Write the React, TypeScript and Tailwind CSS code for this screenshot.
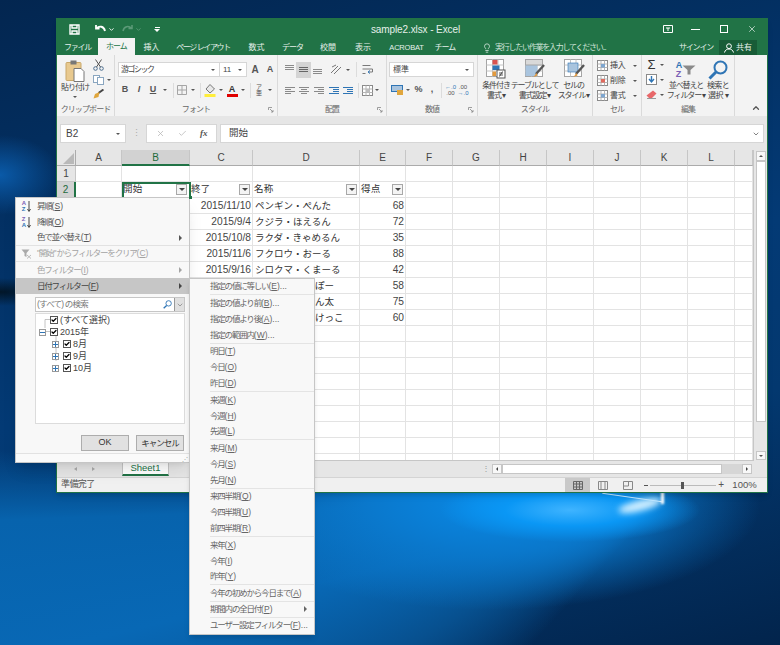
import { ChevronDown, ChevronUp, Check, Lightbulb, X } from "lucide-react";
import type { ReactNode } from "react";

const columns = [
  { name: "A", width: "w-[46px]" },
  { name: "B", width: "w-[68px]" },
  { name: "C", width: "w-[63px]" },
  { name: "D", width: "w-[107px]" },
  { name: "E", width: "w-[46px]" },
  { name: "F", width: "w-[47px]" },
  { name: "G", width: "w-[47px]" },
  { name: "H", width: "w-[47px]" },
  { name: "I", width: "w-[47px]" },
  { name: "J", width: "w-[47px]" },
  { name: "K", width: "w-[47px]" },
  { name: "L", width: "w-[47px]" },
  { name: "", width: "w-[18px]" },
];

// names in rows 8-10 are mostly hidden by the date submenu
const tableRows = [
  ["2015/11/10", "ペンギン・ぺんた", "68"],
  ["2015/9/4", "クジラ・ほえるん", "72"],
  ["2015/10/8", "ラクダ・きゃめるん", "35"],
  ["2015/11/6", "フクロウ・おーる", "88"],
  ["2015/9/16", "シロクマ・くまーる", "42"],
  ["", "ぽー", "58"],
  ["", "ん太", "75"],
  ["", "けっこ", "60"],
];

const dateGroups = [
  ["指定の値に等しい(E)..."],
  ["指定の値より前(B)...", "指定の値より後(A)...", "指定の範囲内(W)..."],
  ["明日(T)", "今日(O)", "昨日(D)"],
  ["来週(K)", "今週(H)", "先週(L)"],
  ["来月(M)", "今月(S)", "先月(N)"],
  ["来四半期(Q)", "今四半期(U)", "前四半期(R)"],
  ["来年(X)", "今年(I)", "昨年(Y)"],
  ["今年の初めから今日まで(A)"],
  ["期間内の全日付(P)"],
  ["ユーザー設定フィルター(F)..."],
];

const treeItems = [
  { label: "(すべて選択)", indent: "ml-[14px]", mark: "" },
  { label: "2015年", indent: "ml-[14px]", mark: "-" },
  { label: "8月", indent: "ml-[27px]", mark: "+" },
  { label: "9月", indent: "ml-[27px]", mark: "+" },
  { label: "10月", indent: "ml-[27px]", mark: "+" },
];

function Mnemonic({ text }: { text: string }) {
  const m = text.match(/^(.*)\((.)\)(.*)$/);
  if (!m) return <span>{text}</span>;
  return (
    <span>
      {m[1]}
      <span className="tracking-[0px]">
        (<span className="underline">{m[2]}</span>){m[3]}
      </span>
    </span>
  );
}

function Caret() {
  return <span className="block w-0 h-0 border-x-[2px] border-x-transparent border-t-[2px] border-t-[#555]" />;
}

function Slot({ w, children }: { w: string; children?: ReactNode }) {
  return <span className={`${w} h-full flex items-center justify-center shrink-0`}>{children}</span>;
}

function Sep() {
  return <span className="w-px h-[15px] bg-[#dcdcdc]" />;
}

function Launcher() {
  return (
    <svg width="6" height="6" viewBox="0 0 6 6" className="absolute right-[3px] top-[4px]" fill="none" stroke="#888" strokeWidth="0.8">
      <path d="M0.5 3V0.5H4M2 2l3 3M5 3v2H3" />
    </svg>
  );
}

function FilterButton() {
  return (
    <span className="w-[11px] h-[11px] bg-[#f4f4f4] border border-[#a8a8a8] flex items-center justify-center shrink-0">
      <span className="w-0 h-0 border-x-[3px] border-x-transparent border-t-[3px] border-t-[#444]" />
    </span>
  );
}

function RibbonGroup({ label, width, launcher, children }: { label: string; width: string; launcher?: boolean; children: ReactNode }) {
  return (
    <div className={`${width} h-full border-r border-[#dadada] flex flex-col shrink-0`}>
      <div className="flex-1 min-h-0">{children}</div>
      <div className="h-[13px] relative text-[8px] leading-[13px] tracking-[-0.9px] text-center text-[#666] whitespace-nowrap">
        {label}
        {launcher && <Launcher />}
      </div>
    </div>
  );
}

function Lines({ rows, color = "#8a8a8a" }: { rows: [number, number, number][]; color?: string }) {
  return (
    <svg width="11" height="11" viewBox="0 0 11 11" stroke={color} strokeWidth="1" fill="none">
      {rows.map(([y, x, w]) => (
        <path key={`${y}-${x}`} d={`M${x} ${y + 0.5}h${w}`} />
      ))}
    </svg>
  );
}

function TinyGrid({ accent = "#bdbdbd" }: { accent?: string }) {
  return (
    <svg width="11" height="11" viewBox="0 0 11 11" fill="none" className="shrink-0">
      <rect x="0.5" y="0.5" width="10" height="10" fill="#fff" stroke="#8a8a8a" />
      <path d="M0.5 4h10M0.5 7.5h10M4 0.5v10M7.5 0.5v10" stroke="#b5b5b5" />
      <rect x="4" y="4" width="4" height="3.5" fill={accent} />
    </svg>
  );
}

function BigGridIcon({ kind }: { kind: "cond" | "table" | "style" }) {
  return (
    <svg width="22" height="21" viewBox="0 0 22 21" fill="none" className="shrink-0">
      <rect x="1.5" y="0.5" width="17" height="17" fill="#fff" stroke="#a5a5a5" />
      <path d="M1.5 6h17M1.5 12h17M7.5 0.5v17M13 0.5v17" stroke="#c4c4c4" />
      {kind === "cond" && (
        <>
          <rect x="7.5" y="1" width="5" height="4.5" fill="#d9534f" />
          <rect x="7.5" y="6.5" width="7" height="4.5" fill="#2f75b5" />
          <rect x="7.5" y="12.5" width="3.5" height="4.5" fill="#e39a3d" />
          <rect x="12" y="11" width="8" height="8" fill="#fff" stroke="#555" />
          <path d="M14 14h4M14 16h4M17.5 12.5l-3 5" stroke="#333" strokeWidth="0.8" />
        </>
      )}
      {kind === "table" && (
        <>
          <rect x="1.5" y="6" width="12" height="11" fill="#a9c4de" />
          <rect x="1.5" y="0.5" width="17" height="5.5" fill="#d9d9d9" stroke="#a5a5a5" />
          <path d="M20 6l-8 9" stroke="#555" strokeWidth="2.4" />
          <path d="M12.5 14l-3 4 4-1.5z" fill="#e39a3d" />
        </>
      )}
      {kind === "style" && (
        <>
          <rect x="5" y="4" width="10" height="9" fill="#a9c4de" stroke="#2f75b5" strokeWidth="0.6" />
          <path d="M21 6l-8 9" stroke="#555" strokeWidth="2.4" />
          <path d="M13.5 14l-3 4 4-1.5z" fill="#e39a3d" />
        </>
      )}
    </svg>
  );
}

function BigButton({ w, lines, kind }: { w: string; lines: string[]; kind: "cond" | "table" | "style" }) {
  return (
    <div className={`${w} flex flex-col items-center shrink-0`}>
      <BigGridIcon kind={kind} />
      <div className="mt-[1px] text-[8px] leading-[10px] tracking-[-1.1px] text-center text-[#444] whitespace-nowrap">
        {lines.map((line) => (
          <div key={line}>{line}</div>
        ))}
      </div>
    </div>
  );
}

function CellRow({ n, cells }: { n: number; cells?: ReactNode[] }) {
  return (
    <div className="flex h-4 shrink-0">
      <div className={`w-[19px] shrink-0 border-r border-b text-center text-[10px] leading-[15px] ${n === 2 ? "bg-[#d2d2d2] text-[#1e6b3c] border-r-2 border-r-[#217346] border-b-[#c6c6c6]" : "bg-[#e6e6e6] text-[#444] border-[#c6c6c6]"}`}>
        {n <= 2 ? n : ""}
      </div>
      {columns.map((col, i) => (
        <div key={col.name} className={`${col.width} shrink-0 border-r border-b border-[#e3e3e3] overflow-hidden`}>
          {cells?.[i]}
        </div>
      ))}
    </div>
  );
}

function Header({ label }: { label: string }) {
  return (
    <div className="h-full flex items-center justify-between pl-[1px] pr-[2px] text-[9.5px] tracking-[0.2px] text-[#333]">
      <span>{label}</span>
      <FilterButton />
    </div>
  );
}

function MenuRow({ icon, text, arrow, tone, border }: { icon?: ReactNode; text: string; arrow?: boolean; tone: string; border?: boolean }) {
  return (
    <div className={`h-4 shrink-0 flex items-center ${tone} ${border ? "border-b border-[#e2e2e2]" : ""}`}>
      <span className="w-[21px] shrink-0 flex justify-center">{icon}</span>
      <span className="flex-1 whitespace-nowrap"><Mnemonic text={text} /></span>
      {arrow && <span className="mr-[7px] w-0 h-0 border-y-[3px] border-y-transparent border-l-[3px] border-l-current" />}
    </div>
  );
}

function SortIcon({ top, bottom }: { top: string; bottom: string }) {
  return (
    <span className="flex items-center gap-[1px]">
      <span className="flex flex-col text-[6px] leading-[6px] font-bold text-[#7a5fb5] tracking-[0px]">
        <span>{top}</span>
        <span className="text-[#2f75b5]">{bottom}</span>
      </span>
      <svg width="4" height="11" viewBox="0 0 4 11" fill="none" stroke="#444"><path d="M2 0v10M0.5 8L2 10.5 3.5 8" /></svg>
    </span>
  );
}

function Magnifier({ size, className }: { size: number; className?: string }) {
  return (
    <svg width={size} height={size} viewBox="0 0 20 20" fill="none" stroke="#2f75b5" className={className}>
      <circle cx="12.5" cy="7.5" r="6" strokeWidth="2" />
      <path d="M8 12l-6.5 6.5" strokeWidth="3" />
    </svg>
  );
}

export default function App() {
  const rows: { n: number; cells?: ReactNode[] }[] = [
    { n: 1 },
    {
      n: 2,
      cells: [
        null,
        <Header label="開始" />,
        <Header label="終了" />,
        <Header label="名称" />,
        <Header label="得点" />,
      ],
    },
    ...tableRows.map((r, i) => ({
      n: i + 3,
      cells: [
        null,
        null,
        <div className="text-right pr-[1px] text-[10.2px] leading-[15px] text-[#444]">{r[0]}</div>,
        <div className={`text-[9.5px] leading-[15px] text-[#333] whitespace-nowrap ${i > 4 ? "pl-[62px]" : "pl-[2px]"}`}>{r[1]}</div>,
        <div className="text-right pr-[1px] text-[10.2px] leading-[15px] text-[#444]">{r[2]}</div>,
      ],
    })),
    ...[11, 12, 13, 14, 15, 16, 17, 18, 19].map((n) => ({ n })),
  ];

  return (
    <div className="relative w-[780px] h-[645px] overflow-hidden font-['Liberation_Sans','Noto_Sans_CJK_JP',sans-serif] bg-[radial-gradient(ellipse_130px_32px_at_570px_510px,#3fb4ff_0%,#0a97f5_50%,transparent_100%),radial-gradient(ellipse_270px_105px_at_490px_505px,#0a88e4_0%,#0a78cc_45%,transparent_100%),conic-gradient(from_222deg_at_665px_497px,transparent_0deg,#07508f_18deg,#0868b5_34deg,#0763ad_46deg,transparent_52deg,transparent_360deg),radial-gradient(ellipse_70px_14px_at_0px_292px,#021628_0%,transparent_100%),radial-gradient(ellipse_60px_40px_at_0px_175px,#0a5aa8_0%,transparent_100%),linear-gradient(165deg,#032650_0%,#033a75_50%,#03386f_70%,#02244c_100%)]">
      {/* light flare under the window */}
      <div className="absolute left-[618px] top-[500px] w-[44px] h-[11px] rounded-[50%] bg-[#cfeeff] blur-[3px] rotate-[-14deg]" />
      <div className="absolute left-[602px] top-[497px] w-[60px] h-px bg-[#bfe6ff] rotate-[8deg]" />
      <div className="absolute left-[661px] top-[492px] w-[3px] h-[12px] bg-white blur-[1px]" />

      {/* excel window */}
      <div className="absolute left-[56px] top-[18px] w-[712px] h-[475px] flex flex-col bg-[#e6e6e6] border border-[#217346] shadow-md">
        {/* title bar */}
        <div className="h-[20px] bg-[#217346] flex items-center text-white shrink-0">
          <svg width="11" height="11" viewBox="0 0 11 11" className="ml-[12px]" fill="none" stroke="#fff" strokeWidth="1.4"><path d="M1 1h9v9H1zM3 1v3h5V1M3 10V7h5v3" /></svg>
          <svg width="11" height="10" viewBox="0 0 11 10" className="ml-[15px]" fill="none" stroke="#fff" strokeWidth="1.8"><path d="M1 1v3.5h3.5M1.5 4.5C4 1.5 9 2 10 7" /></svg>
          <ChevronDown className="ml-[2px] w-[7px] h-[7px]" strokeWidth={3} />
          <svg width="11" height="10" viewBox="0 0 11 10" className="ml-[7px]" fill="none" stroke="#5c9a78" strokeWidth="1.5"><path d="M10 1v3.5H6.5M9.5 4.5C7 1.5 2 2 1 7" /></svg>
          <ChevronDown className="ml-[2px] w-[7px] h-[7px] text-[#5c9a78]" strokeWidth={3} />
          <span className="ml-[12px] flex flex-col items-center gap-[1px]">
            <span className="w-[5px] h-px bg-white" />
            <span className="w-0 h-0 border-x-[3px] border-x-transparent border-t-[3px] border-t-white" />
          </span>
          <div className="flex-1 text-center text-[10px] text-[#e5f0ea] pl-[8px] tracking-[-0.1px]">sample2.xlsx - Excel</div>
          <svg width="10" height="8" viewBox="0 0 10 8" className="mr-[18px]" fill="none" stroke="#fff"><path d="M0.5 0.5h9v7h-9zM3 3h4M5 3v3" /></svg>
          <span className="w-[9px] h-px bg-white mr-[20px]" />
          <span className="w-[8px] h-[8px] border border-white mr-[19px]" />
          <X className="w-[10px] h-[10px] mr-[10px]" strokeWidth={1.5} />
        </div>

        {/* tabs */}
        <div className="h-[16px] bg-[#217346] flex items-end text-[8px] leading-[15px] text-[#e5f0ea] shrink-0 whitespace-nowrap">
          <span className="w-[41px] text-center tracking-[-1.2px]">ファイル</span>
          <span className="w-[37px] h-[17px] bg-[#f3f3f3] text-[#217346] text-center leading-[17px] tracking-[-1px]">ホーム</span>
          <span className="w-[33px] text-center">挿入</span>
          <span className="w-[70px] text-center tracking-[-1.4px]">ページ レイアウト</span>
          <span className="w-[37px] text-center">数式</span>
          <span className="w-[35px] text-center tracking-[-1px]">データ</span>
          <span className="w-[36px] text-center">校閲</span>
          <span className="w-[34px] text-center">表示</span>
          <span className="w-[53px] text-center tracking-[-0.2px] text-[7.5px]">ACROBAT</span>
          <span className="w-[24px] text-center tracking-[-1px]">チーム</span>
          <span className="flex items-center ml-[25px] gap-[3px] text-[#cfe3d8] tracking-[-1.25px]">
            <Lightbulb className="w-[10px] h-[10px]" />
            実行したい作業を入力してください...
          </span>
          <span className="ml-auto mr-[6px] tracking-[-1.2px]">サインイン</span>
          <span className="w-[38px] mr-[10px] h-[15px] bg-[#185c37] flex items-center justify-center gap-[2px]">
            <svg width="10" height="10" viewBox="0 0 10 10" fill="none" stroke="#fff"><circle cx="5" cy="3.2" r="2.4" /><path d="M0.5 9.5C1 7 3 6 5 6s4 1 4.5 3.5" /></svg>
            共有
          </span>
        </div>

        {/* ribbon */}
        <div className="h-[61px] bg-[#f3f3f3] flex shrink-0 text-[#444]">
          <RibbonGroup label="クリップボード" width="w-[58px]">
            <div className="flex h-full">
              <div className="w-[36px] flex flex-col items-center pt-[5px]">
                <svg width="22" height="22" viewBox="0 0 22 22" fill="none" className="shrink-0">
                  <rect x="2" y="2.5" width="15" height="18" rx="1" fill="#e8c98f" stroke="#c9a86a" />
                  <rect x="6.5" y="0.5" width="6" height="4" fill="#777" />
                  <path d="M10 8.5h7l3 3v10H10z" fill="#fff" stroke="#777" />
                </svg>
                <div className="mt-[1px] text-[8px] leading-[10px] tracking-[-1px] whitespace-nowrap">貼り付け</div>
                <div className="mt-[3px]"><Caret /></div>
              </div>
              <div className="flex flex-col pt-[4px] gap-[4px]">
                <svg width="11" height="12" viewBox="0 0 11 12" fill="none" stroke="#4d6e8f"><circle cx="2.5" cy="9.5" r="1.8" /><circle cx="8.5" cy="9.5" r="1.8" /><path d="M3.5 8L8.5 0.5M7.5 8L2.5 0.5" stroke="#555" /></svg>
                <span className="flex items-center gap-[3px]">
                  <svg width="11" height="10" viewBox="0 0 11 10" fill="#fff" stroke="#8aa6c0"><rect x="0.5" y="0.5" width="6" height="7" /><rect x="4.5" y="2.5" width="6" height="7" /></svg>
                  <Caret />
                </span>
                <svg width="11" height="10" viewBox="0 0 11 10" fill="none"><path d="M10.5 0.5L5.5 4" stroke="#444" strokeWidth="2" /><path d="M6.5 3L2 5 0.5 9.5l5-1.5z" fill="#e0a63d" /></svg>
              </div>
            </div>
          </RibbonGroup>

          <RibbonGroup label="フォント" width="w-[163px]" launcher>
            <div className="pl-[3px] pt-[7px]">
              <div className="flex h-[15px] items-center">
                <div className="w-[102px] h-[15px] bg-white border border-[#d6d6d6] flex items-center pl-[2px] pr-[4px] text-[8px] tracking-[-1.5px]">
                  <span className="flex-1">游ゴシック</span>
                  <Caret />
                </div>
                <div className="w-[27px] h-[15px] bg-white border border-[#d6d6d6] border-l-0 flex items-center pl-[3px] pr-[4px] text-[8px]">
                  <span className="flex-1">11</span>
                  <Caret />
                </div>
                <Slot w="w-[16px]"><span className="text-[10px] font-bold text-[#555]">A</span></Slot>
                <Slot w="w-[14px]"><span className="text-[9px] font-bold text-[#555]">A</span></Slot>
              </div>
              <div className="flex h-[16px] mt-[5px] items-center font-bold text-[9px] text-[#555]">
                <Slot w="w-[14px]">B</Slot>
                <Slot w="w-[14px]"><span className="italic">I</span></Slot>
                <Slot w="w-[14px]"><span className="underline">U</span></Slot>
                <Slot w="w-[10px]"><Caret /></Slot>
                <Slot w="w-[6px]"><Sep /></Slot>
                <Slot w="w-[12px]">
                  <svg width="10" height="10" viewBox="0 0 10 10" fill="none" stroke="#a5a5a5"><path d="M0.5 0.5h9v9h-9zM5 0.5v9M0.5 5h9" /></svg>
                </Slot>
                <Slot w="w-[10px]"><Caret /></Slot>
                <Slot w="w-[5px]"><Sep /></Slot>
                <Slot w="w-[14px]">
                  <svg width="12" height="13" viewBox="0 0 12 13" fill="none"><path d="M6 0.5L10.5 5 6 9 2 5z" fill="#e8e8e8" stroke="#777" /><rect x="0.5" y="10" width="11" height="3" fill="#ffee3b" /></svg>
                </Slot>
                <Slot w="w-[8px]"><Caret /></Slot>
                <Slot w="w-[14px]">
                  <span className="w-[11px] h-[13px] text-[9px] leading-[10px] text-center text-[#333] border-b-[3px] border-b-[#e00000]">A</span>
                </Slot>
                <Slot w="w-[8px]"><Caret /></Slot>
                <Slot w="w-[6px]"><Sep /></Slot>
                <Slot w="w-[12px]"><span className="text-[6px] leading-[6px] text-center font-normal">ア<br />亜</span></Slot>
                <Slot w="w-[10px]"><Caret /></Slot>
              </div>
            </div>
          </RibbonGroup>

          <RibbonGroup label="配置" width="w-[109px]" launcher>
            <div className="pl-[5px] pt-[7px]">
              <div className="flex h-[15px] items-center">
                <Slot w="w-[12px]"><Lines rows={[[1, 1, 9], [3, 1, 9], [5, 1, 9]]} /></Slot>
                <span className="w-[15px] h-[16px] ml-[1px] bg-[#d4d4d4] flex items-center justify-center"><Lines rows={[[3, 1, 9], [5, 1, 9], [7, 1, 9]]} color="#666" /></span>
                <Slot w="w-[12px]"><Lines rows={[[5, 1, 9], [7, 1, 9], [9, 1, 9]]} /></Slot>
                <Slot w="w-[6px]" />
                <Slot w="w-[14px]">
                  <svg width="12" height="11" viewBox="0 0 12 11" fill="none"><path d="M1 9l7-7M4 10l7-7" stroke="#777" /><path d="M2 3l4-2" stroke="#777" /></svg>
                </Slot>
                <Slot w="w-[9px]"><Caret /></Slot>
                <Slot w="w-[9px]"><Sep /></Slot>
                <Slot w="w-[12px]">
                  <svg width="11" height="11" viewBox="0 0 11 11" fill="none"><path d="M0.5 1.5h8M0.5 5h10v3H7M0.5 9.5h3" stroke="#7a7a7a" /><path d="M8 6.5L6 8l2 1.5" stroke="#2f75b5" /></svg>
                </Slot>
              </div>
              <div className="flex h-[16px] mt-[5px] items-center">
                <Slot w="w-[14px]"><Lines rows={[[2, 0, 10], [4, 0, 6], [6, 0, 10], [8, 0, 6]]} /></Slot>
                <Slot w="w-[14px]"><Lines rows={[[2, 0, 10], [4, 2, 6], [6, 0, 10], [8, 2, 6]]} /></Slot>
                <Slot w="w-[16px]"><Lines rows={[[2, 0, 10], [4, 4, 6], [6, 0, 10], [8, 4, 6]]} /></Slot>
                <Slot w="w-[14px]"><Lines rows={[[2, 0, 10], [4, 4, 6], [6, 4, 6], [8, 0, 10]]} color="#2f75b5" /></Slot>
                <Slot w="w-[14px]"><Lines rows={[[2, 0, 10], [4, 4, 6], [6, 4, 6], [8, 0, 10]]} color="#2f75b5" /></Slot>
                <Slot w="w-[6px]"><Sep /></Slot>
                <Slot w="w-[12px]"><TinyGrid /></Slot>
                <Slot w="w-[8px]"><Caret /></Slot>
              </div>
            </div>
          </RibbonGroup>

          <RibbonGroup label="数値" width="w-[91px]" launcher>
            <div className="pl-[2px] pt-[7px]">
              <div className="w-[85px] h-[15px] bg-white border border-[#d6d6d6] flex items-center pl-[3px] pr-[4px] text-[8px]">
                <span className="flex-1">標準</span>
                <Caret />
              </div>
              <div className="flex h-[16px] mt-[5px] items-center text-[9px] font-bold text-[#555]">
                <Slot w="w-[15px]">
                  <svg width="12" height="10" viewBox="0 0 12 10"><rect x="0.5" y="0.5" width="11" height="6" fill="#a9c4de" stroke="#2f75b5" /><rect x="6" y="5" width="6" height="5" fill="#e0a63d" /></svg>
                </Slot>
                <Slot w="w-[7px]"><Caret /></Slot>
                <Slot w="w-[15px]">%</Slot>
                <Slot w="w-[12px]">,</Slot>
                <Slot w="w-[6px]"><Sep /></Slot>
                <Slot w="w-[13px]"><span className="text-[6px] leading-[6px] text-center font-normal text-[#2f75b5]">←.0<br /><span className="text-[#555]">.00</span></span></Slot>
                <Slot w="w-[12px]"><span className="text-[6px] leading-[6px] text-center font-normal text-[#555]">.00<br /><span className="text-[#2f75b5]">→.0</span></span></Slot>
              </div>
            </div>
          </RibbonGroup>

          <RibbonGroup label="スタイル" width="w-[115px]">
            <div className="flex pl-[2px] pt-[4px]">
              <BigButton w="w-[32px]" lines={["条件付き", "書式 ▾"]} kind="cond" />
              <BigButton w="w-[45px]" lines={["テーブルとして", "書式設定 ▾"]} kind="table" />
              <BigButton w="w-[33px]" lines={["セルの", "スタイル ▾"]} kind="style" />
            </div>
          </RibbonGroup>

          <RibbonGroup label="セル" width="w-[49px]">
            <div className="pl-[4px] pt-[3px] flex flex-col text-[8px] leading-[15px]">
              {["挿入", "削除", "書式"].map((t, i) => (
                <div key={t} className="h-[15px] flex items-center gap-[2px]">
                  <TinyGrid accent={i === 1 ? "#e06a5e" : "#7ea6cf"} />
                  <span className="w-[17px] tracking-[-0.2px]">{t}</span>
                  <span className="ml-[4px]"><Caret /></span>
                </div>
              ))}
            </div>
          </RibbonGroup>

          <RibbonGroup label="編集" width="w-[93px]">
            <div className="flex pl-[4px] h-full">
              <div className="w-[21px] flex flex-col pt-[2px] shrink-0">
                <div className="h-[15px] flex items-center gap-[3px]">
                  <span className="w-[11px] text-center text-[13px] leading-[13px] text-[#333]">Σ</span>
                  <Caret />
                </div>
                <div className="h-[15px] flex items-center gap-[3px]">
                  <svg width="11" height="11" viewBox="0 0 11 11" fill="none" stroke="#8a8a8a"><rect x="0.5" y="0.5" width="10" height="10" fill="#fff" /><path d="M5.5 2v5M3 5l2.5 3L8 5" stroke="#2f75b5" strokeWidth="1.4" /></svg>
                  <Caret />
                </div>
                <div className="h-[15px] flex items-center gap-[3px]">
                  <svg width="11" height="9" viewBox="0 0 11 9"><path d="M7 0.5l3.5 3L6 8H3L0.5 5.5z" fill="#e8686a" /><path d="M1 8.5h9" stroke="#999" /></svg>
                  <Caret />
                </div>
              </div>
              <div className="w-[38px] flex flex-col items-center shrink-0 pt-[4px]">
                <div className="h-[21px] flex items-center shrink-0">
                  <span className="flex flex-col text-[9px] leading-[9px] font-bold text-[#2f75b5]">
                    <span>A</span>
                    <span className="text-[#7a5fb5]">Z</span>
                  </span>
                  <svg width="14" height="10" viewBox="0 0 14 10"><path d="M0.5 0.5h13L8.5 5v4.5h-3V5z" fill="#8a8a8a" /></svg>
                </div>
                <div className="mt-[1px] text-[8px] leading-[10px] tracking-[-1.1px] text-center whitespace-nowrap">並べ替えと<br />フィルター ▾</div>
              </div>
              <div className="w-[26px] flex flex-col items-center shrink-0 pt-[4px]">
                <div className="h-[21px] flex items-center shrink-0"><Magnifier size={20} /></div>
                <div className="mt-[1px] text-[8px] leading-[10px] tracking-[-0.6px] text-center whitespace-nowrap">検索と<br />選択 ▾</div>
              </div>
            </div>
          </RibbonGroup>

          <div className="flex-1 flex items-end justify-end pr-[6px] pb-[3px]">
            <ChevronUp className="w-[10px] h-[10px] text-[#555]" strokeWidth={3} />
          </div>
        </div>

        {/* formula bar */}
        <div className="h-[34px] bg-[#e6e6e6] flex items-start shrink-0 pt-[8px] pl-[3px] pr-[3px]">
          <div className="w-[66px] h-[19px] bg-white border border-[#d6d6d6] flex items-center pl-[5px] pr-[5px] text-[10px] text-[#444]">
            <span className="flex-1">B2</span>
            <Caret />
          </div>
          <span className="w-[20px] h-[19px] flex items-center justify-center text-[9px] text-[#aaa]">⋮</span>
          <div className="w-[71px] h-[19px] bg-white border border-[#d6d6d6] flex items-center justify-around px-[2px] text-[#b5b5b5]">
            <X className="w-[9px] h-[9px]" />
            <Check className="w-[9px] h-[9px]" />
            <span className="font-['Liberation_Serif',serif] italic font-bold text-[9px] text-[#555]">fx</span>
          </div>
          <div className="flex-1 ml-[3px] h-[19px] bg-white border border-[#d6d6d6] text-[9.5px] pl-[8px] text-[#444] flex items-center">
            <span className="flex-1">開始</span>
            <ChevronDown className="w-[8px] h-[8px] mr-[3px]" />
          </div>
        </div>

        {/* sheet */}
        <div className="flex-1 flex min-h-0 bg-[#e6e6e6]">
          <div className="w-[696px] shrink-0 flex flex-col overflow-hidden bg-white border-b border-[#c6c6c6]">
            <div className="flex h-[16px] shrink-0 bg-[#e6e6e6]">
              <div className="w-[19px] shrink-0 border-r border-b border-[#ababab] flex items-end justify-end p-[1px]">
                <span className="w-0 h-0 border-l-[11px] border-l-transparent border-b-[11px] border-b-[#b9b9b9]" />
              </div>
              {columns.map((col) => (
                <div key={col.name} className={`${col.width} shrink-0 border-r text-center text-[10px] leading-[15px] ${col.name === "B" ? "bg-[#d2d2d2] text-[#1e6b3c] border-r-[#c6c6c6] border-b-2 border-b-[#217346]" : "text-[#444] border-[#c6c6c6] border-b border-b-[#ababab]"}`}>
                  {col.name}
                </div>
              ))}
            </div>
            {rows.map((r) => (
              <CellRow key={r.n} n={r.n} cells={r.cells} />
            ))}
          </div>
          <div className="w-[14px] shrink-0 border-l border-[#c6c6c6] flex flex-col items-center pt-[1px] pb-[1px]">
            <span className="w-[10px] h-[10px] bg-[#f8f8f8] border border-[#c6c6c6] flex items-center justify-center">
              <span className="w-0 h-0 border-x-[2px] border-x-transparent border-b-[2px] border-b-[#555]" />
            </span>
            <span className="w-[10px] h-[261px] bg-white border border-[#c6c6c6]" />
            <span className="flex-1" />
            <span className="w-[10px] h-[9px] bg-[#f8f8f8] border border-[#c6c6c6] flex items-center justify-center">
              <span className="w-0 h-0 border-x-[2px] border-x-transparent border-t-[2px] border-t-[#555]" />
            </span>
          </div>
        </div>

        {/* sheet tabs */}
        <div className="h-[16px] bg-[#e6e6e6] flex items-center shrink-0 text-[#aaa]">
          <span className="ml-[17px] w-0 h-0 border-y-[2px] border-y-transparent border-r-[3px] border-r-current" />
          <span className="ml-[15px] w-0 h-0 border-y-[2px] border-y-transparent border-l-[3px] border-l-current" />
          <span className="ml-[27px] w-[47px] h-[15px] mb-[1px] bg-white border-x border-x-[#c6c6c6] border-b-2 border-b-[#217346] text-center text-[9.5px] leading-[14px] text-[#217346]">Sheet1</span>
          <span className="ml-[313px] w-[2px] text-[8px] text-[#999]">⋮</span>
          <span className="ml-[8px] w-[10px] h-[10px] bg-[#f8f8f8] border border-[#c6c6c6] flex items-center justify-center">
            <span className="w-0 h-0 border-y-[2px] border-y-transparent border-r-[2px] border-r-[#444]" />
          </span>
          <span className="w-[220px] h-[10px] bg-white border border-[#c6c6c6]" />
          <span className="w-[20px] h-[10px] bg-[#d6d6d6]" />
          <span className="w-[10px] h-[10px] bg-[#f8f8f8] border border-[#c6c6c6] flex items-center justify-center">
            <span className="w-0 h-0 border-y-[2px] border-y-transparent border-l-[2px] border-l-[#444]" />
          </span>
        </div>

        {/* status bar */}
        <div className="h-[15px] shrink-0 bg-[#f0f0f0] flex items-center text-[9px] text-[#555] border-t border-[#d4d4d4]">
          <span className="ml-[4px] flex-1 tracking-[-0.6px]">準備完了</span>
          <span className="w-[25px] h-full bg-[#c9c9c9] flex items-center justify-center">
            <svg width="10" height="9" viewBox="0 0 10 9" fill="none" stroke="#666"><path d="M0.5 0.5h9v8h-9zM3.5 0.5v8M6.5 0.5v8M0.5 3h9M0.5 6h9" /></svg>
          </span>
          <span className="w-[25px] flex items-center justify-center">
            <svg width="10" height="9" viewBox="0 0 10 9" fill="none" stroke="#888"><path d="M0.5 0.5h9v8h-9zM3 0.5v8M7 0.5v8" /></svg>
          </span>
          <span className="w-[25px] flex items-center justify-center">
            <svg width="10" height="9" viewBox="0 0 10 9" fill="none" stroke="#888"><path d="M0.5 0.5h9v8h-9zM0.5 5h5V0.5" /></svg>
          </span>
          <div className="ml-[4px] w-[80px] flex items-center gap-[2px]">
            <span className="w-[4px] h-px bg-[#555]" />
            <span className="flex-1 h-px bg-[#bbb] flex items-center pl-[31px]">
              <span className="w-[3px] h-[7px] bg-[#555]" />
            </span>
            <span className="text-[10px] leading-[10px]">+</span>
          </div>
          <span className="w-[41px] mr-[2px] text-center text-[9.5px]">100%</span>
        </div>
      </div>

      {/* selection outline around B2 */}
      <div className="absolute left-[122px] top-[182px] w-[69px] h-[17px] border-2 border-[#217346]" />

      {/* filter dropdown */}
      <div className="absolute left-[15px] top-[197px] w-[175px] h-[266px] flex flex-col bg-[#f8f8f8] border border-[#c6c6c6] shadow-lg text-[8.5px] tracking-[-1.2px] text-[#555]">
        <MenuRow text="昇順(S)" tone="" icon={<SortIcon top="A" bottom="Z" />} />
        <MenuRow text="降順(O)" tone="" icon={<SortIcon top="Z" bottom="A" />} />
        <MenuRow text="色で並べ替え(T)" tone="" arrow border />
        <MenuRow
          text="&quot;開始&quot; からフィルターをクリア(C)"
          tone="text-[#a3a3a3]"
          border
          icon={<svg width="11" height="10" viewBox="0 0 11 10"><path d="M0.5 0.5h8L5.5 4v4L3.5 7V4z" fill="#aaa" /><path d="M6 6l4 3.5M10 6L6 9.5" stroke="#bbb" /></svg>}
        />
        <MenuRow text="色フィルター(I)" tone="text-[#a3a3a3]" arrow />
        <MenuRow text="日付フィルター(F)" tone="bg-[#c6c6c6] text-[#444]" arrow />

        <div className="ml-[19px] mt-[3px] w-[150px] h-[15px] shrink-0 bg-white border border-[#c6c6c6] flex items-center pl-[1px] text-[#777] tracking-[-0.8px]">
          <span className="flex-1">(すべて) の検索</span>
          <Magnifier size={9} />
          <span className="ml-[2px] w-[10px] h-[13px] bg-[#e0e0e0] border-l border-[#999] flex items-center justify-center"><ChevronDown className="w-[8px] h-[8px]" /></span>
        </div>

        <div className="ml-[19px] mt-[1px] w-[150px] h-[111px] shrink-0 bg-white border border-[#dcdcdc] text-[9px] leading-[12px] tracking-[0px] text-[#444] relative">
          <svg width="30" height="60" viewBox="0 0 30 60" className="absolute left-0 top-0" fill="none" stroke="#b5b5b5" strokeWidth="0.8">
            <path d="M9 5.5h5M9 5.5V14M9 17.5h5M20 22v25M20 29.5h1M20 41.5h1M20 53.5h1" />
          </svg>
          {treeItems.map((item) => (
            <div key={item.label} className={`flex items-center gap-[2px] h-[12px] ${item.indent} relative`}>
              {item.mark && (
                <span className="absolute left-[-11px] w-[7px] h-[7px] bg-white border border-[#999] flex items-center justify-center">
                  <span className="w-[5px] h-px bg-[#2f75b5]" />
                  {item.mark === "+" && <span className="absolute w-px h-[5px] bg-[#2f75b5]" />}
                </span>
              )}
              <span className="w-[8px] h-[8px] border border-[#555] bg-white flex items-center justify-center shrink-0">
                <Check className="w-[8px] h-[8px] text-black" strokeWidth={5} />
              </span>
              {item.label}
            </div>
          ))}
        </div>

        <div className="mt-[11px] flex justify-end gap-[7px] pr-[5px]">
          <button className="w-[48px] h-[16px] bg-[#e1e1e1] border border-[#adadad] text-[9px] text-[#333] tracking-[0px]">OK</button>
          <button className="w-[48px] h-[16px] bg-[#e1e1e1] border border-[#adadad] text-[8.5px] text-[#333] tracking-[-1px]">キャンセル</button>
        </div>
        <div className="mt-auto h-[9px] border-t border-[#e2e2e2] bg-[#fafafa] flex items-end justify-end pr-[2px] text-[6px] leading-[6px] text-[#999]">⋰</div>
      </div>

      {/* fill handle of the selected cell */}
      <div className="absolute left-[189px] top-[196px] w-[3px] h-[3px] bg-[#217346]" />

      {/* date filter submenu */}
      <div className="absolute left-[189px] top-[278px] w-[126px] h-[357px] flex flex-col bg-[#f8f8f8] border border-[#c6c6c6] shadow-md text-[8.5px] tracking-[-1.2px] text-[#666]">
        {dateGroups.map((group, gi) => (
          <div key={gi} className="flex flex-col pl-[20px]">
            {group.map((item, ii) => (
              <div key={item} className={`h-[16.14px] flex items-center justify-between pr-[7px] whitespace-nowrap ${ii === group.length - 1 && gi < dateGroups.length - 1 ? "border-b border-[#e4e4e4]" : ""}`}>
                <Mnemonic text={item} />
                {item.startsWith("期間") && <span className="w-0 h-0 border-y-[3px] border-y-transparent border-l-[3px] border-l-current" />}
              </div>
            ))}
          </div>
        ))}
      </div>
    </div>
  );
}
